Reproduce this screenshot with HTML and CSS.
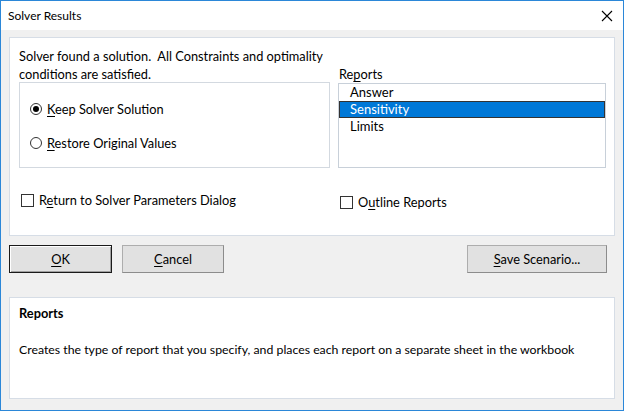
FILE: index.html
```html
<!DOCTYPE html>
<html>
<head>
<meta charset="utf-8">
<title>Solver Results</title>
<link rel="stylesheet" href="styles.css">
</head>
<body>
<div class="window">
  <div class="titlebar">
    <span class="title">Solver Results</span>
    <svg class="close" width="12" height="12" viewBox="0 0 12 12"><path d="M1 1 L11 11 M11 1 L1 11" stroke="#000" stroke-width="1.1" fill="none"/></svg>
  </div>
  <div class="body">
    <div class="panel main">
      <p class="msg">Solver found a solution.&nbsp; All Constraints and optimality<br>conditions are satisfied.</p>
      <div class="lbl">Re<u>p</u>orts</div>
      <div class="groupbox">
        <div class="opt"><span class="radio checked"></span><span><u>K</u>eep Solver Solution</span></div>
        <div class="opt"><span class="radio"></span><span><u>R</u>estore Original Values</span></div>
      </div>
      <ul class="listbox">
        <li>Answer</li>
        <li class="sel">Sensitivity</li>
        <li>Limits</li>
      </ul>
      <div class="check check-return"><span class="box"></span><span>R<u>e</u>turn to Solver Parameters Dialog</span></div>
      <div class="check check-outline"><span class="box"></span><span>O<u>u</u>tline Reports</span></div>
    </div>
    <div class="buttons">
      <button class="btn btn-default"><u>O</u>K</button>
      <button class="btn btn-cancel"><u>C</u>ancel</button>
      <button class="btn btn-save"><u>S</u>ave Scenario...</button>
    </div>
    <div class="panel help">
      <div class="help-title">Reports</div>
      <div class="help-text">Creates the type of report that you specify, and places each report on a separate sheet in the workbook</div>
    </div>
  </div>
</div>
</body>
</html>
```
FILE: styles.css
```css
* { box-sizing: border-box; }
html, body { margin: 0; padding: 0; }
body {
  width: 624px;
  height: 411px;
  overflow: hidden;
  font-family: Lato, "Open Sans", sans-serif;
  font-size: 12.8px;
  color: #000;
}
u { text-decoration: underline; text-underline-offset: 2px; }
.window {
  width: 624px;
  height: 411px;
  border: 1px solid #2b87d8;
  background: #f0f0f0;
  display: flex;
  flex-direction: column;
}
.titlebar {
  height: 29px;
  background: #fff;
  display: flex;
  align-items: center;
  justify-content: space-between;
  padding: 0 10px 0 7px;
  font-size: 12px;
}
.close { display: block; }
.body {
  display: flex;
  flex-direction: column;
  padding: 7px 8px 0 8px;
}
.panel {
  background: #fff;
  border: 1px solid #d6dde6;
}
.main {
  height: 199px;
  display: grid;
  grid-template-columns: 311px 268px;
  grid-template-rows: 36px 86px auto;
  column-gap: 8px;
  padding: 9px 0 0 9px;
  line-height: 18px;
}
.msg { margin: 0; white-space: nowrap; }
.lbl { align-self: end; padding-left: 1px; }
.groupbox {
  margin-top: -1px;
  height: 86px;
  border: 1px solid #d3d9e0;
  display: flex;
  flex-direction: column;
  padding: 17px 0 0 10px;
  gap: 16px;
}
.opt { display: flex; align-items: center; gap: 5px; height: 18px; }
.radio {
  width: 12px; height: 12px;
  border: 1px solid #333;
  border-radius: 50%;
  background: #fff;
  position: relative;
}
.radio.checked::after {
  content: "";
  position: absolute;
  left: 2px; top: 2px;
  width: 6px; height: 6px;
  border-radius: 50%;
  background: #000;
}
.listbox {
  list-style: none;
  margin: 0;
  padding: 0;
  height: 85px;
  border: 1px solid #c8d0d9;
  font-size: 13px;
}
.listbox li {
  height: 17px;
  line-height: 17px;
  padding-left: 11px;
}
.listbox .sel {
  background: #0078d7;
  color: #fff;
  outline: 1px solid #333;
  outline-offset: -1px;
}
.check { display: flex; align-items: center; gap: 5px; height: 18px; white-space: nowrap; }
.check-return { margin-top: 22px; padding-left: 2px; }
.check-outline { margin-top: 24px; padding-left: 2px; }
.box {
  width: 13px; height: 13px;
  border: 1px solid #333;
  background: #fff;
}
.buttons {
  display: flex;
  margin-top: 9px;
  height: 28px;
  padding-right: 8px;
}
.btn {
  font: inherit;
  color: #000;
  height: 28px;
  background: #e1e1e1;
  border: 1px solid #adadad;
  border-right-color: #8c8c8c;
  border-bottom-color: #8c8c8c;
  padding: 0;
  line-height: 18px;
}
.btn-default {
  width: 103px;
  border: 1px solid #1a1a1a;
  box-shadow: inset 1px 1px 0 #fff, inset -1px -1px 0 #a0a0a0;
}
.btn-cancel { width: 102px; margin-left: 10px; }
.btn-save { width: 140px; margin-left: auto; }
.help {
  margin-top: 24px;
  height: 102px;
  padding: 6px 9px 0 9px;
  line-height: 18px;
}
.help-title { font-weight: 700; }
.help-text { margin-top: 19px; white-space: nowrap; font-size: 12.3px; }
```
